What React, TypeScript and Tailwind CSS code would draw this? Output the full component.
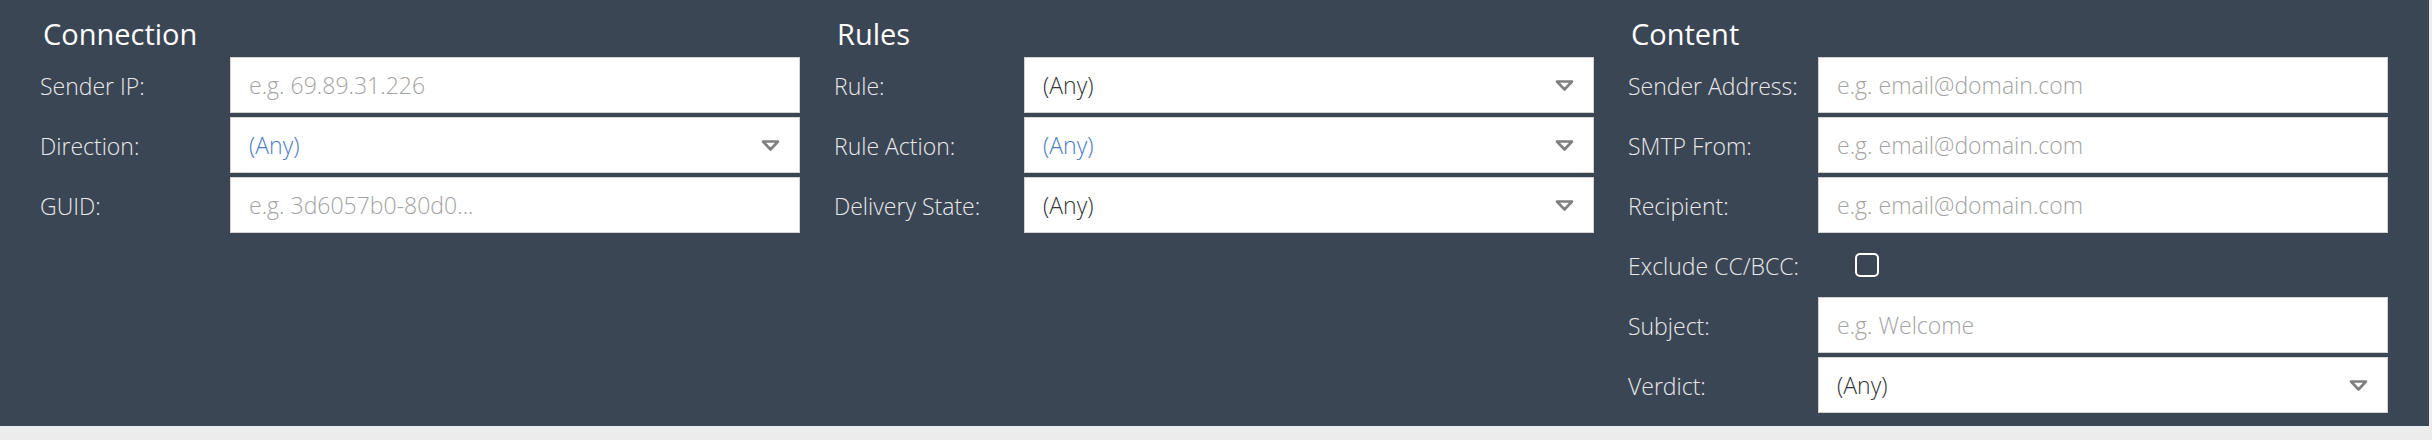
import type { ReactNode } from 'react';

type Field =
  | { label: string; kind: 'text'; placeholder: string }
  | { label: string; kind: 'select'; value: string; blue?: boolean }
  | { label: string; kind: 'check' };

interface Section {
  title: string;
  fields: Field[];
}

const sections: Section[] = [
  {
    title: 'Connection',
    fields: [
      { label: 'Sender IP:', kind: 'text', placeholder: 'e.g. 69.89.31.226' },
      { label: 'Direction:', kind: 'select', value: '(Any)', blue: true },
      { label: 'GUID:', kind: 'text', placeholder: 'e.g. 3d6057b0-80d0...' },
    ],
  },
  {
    title: 'Rules',
    fields: [
      { label: 'Rule:', kind: 'select', value: '(Any)' },
      { label: 'Rule Action:', kind: 'select', value: '(Any)', blue: true },
      { label: 'Delivery State:', kind: 'select', value: '(Any)' },
    ],
  },
  {
    title: 'Content',
    fields: [
      { label: 'Sender Address:', kind: 'text', placeholder: 'e.g. email@domain.com' },
      { label: 'SMTP From:', kind: 'text', placeholder: 'e.g. email@domain.com' },
      { label: 'Recipient:', kind: 'text', placeholder: 'e.g. email@domain.com' },
      { label: 'Exclude CC/BCC:', kind: 'check' },
      { label: 'Subject:', kind: 'text', placeholder: 'e.g. Welcome' },
      { label: 'Verdict:', kind: 'select', value: '(Any)' },
    ],
  },
];

const Caret = () => (
  <svg width="19" height="11" viewBox="0 0 19 11" className="shrink-0">
    <path
      d="M2 1.5 H17 L9.5 9.5 Z"
      fill="none"
      stroke="#808080"
      strokeWidth="2.6"
      strokeLinejoin="round"
    />
  </svg>
);

const Box = ({ children }: { children: ReactNode }) => (
  <div className="flex h-[56px] flex-1 items-center border border-[#d2d2d2] bg-white pl-[18px] pr-[19px]">
    {children}
  </div>
);

const Control = ({ field }: { field: Field }) => {
  if (field.kind === 'text') {
    return (
      <Box>
        <input
          placeholder={field.placeholder}
          className="w-full bg-transparent text-[23px] font-light text-[#333] outline-none placeholder:text-[#a3a3a3]"
        />
      </Box>
    );
  }
  if (field.kind === 'select') {
    return (
      <Box>
        <span className={`flex-1 text-[23px] font-light ${field.blue ? 'text-[#4a7dbf]' : 'text-[#333]'}`}>
          {field.value}
        </span>
        <Caret />
      </Box>
    );
  }
  return (
    <div className="flex h-[56px] flex-1 items-center pl-[37px]">
      <div className="h-[24px] w-[24px] rounded-[5px] border-2 border-white" />
    </div>
  );
};

export default function App() {
  return (
    <div className="h-[440px] w-full bg-[#ececec]" style={{ fontFamily: '"Open Sans", "Liberation Sans", sans-serif' }}>
      <div className="flex h-[426px] w-[2429px] gap-[34px] bg-[#3b4655] pl-[40px] pt-[14px]">
        {sections.map((s) => (
          <div key={s.title} className="flex w-[760px] flex-col">
            <h2 className="mb-[3px] h-[40px] pl-[3px] text-[29px] font-normal leading-[40px] text-white">
              {s.title}
            </h2>
            <div className="flex flex-col gap-[4px]">
              {s.fields.map((f) => (
                <div key={f.label} className="flex items-center">
                  <label className="w-[190px] shrink-0 pt-[2px] text-[23px] font-light text-[#e8e9eb]">{f.label}</label>
                  <Control field={f} />
                </div>
              ))}
            </div>
          </div>
        ))}
      </div>
    </div>
  );
}
